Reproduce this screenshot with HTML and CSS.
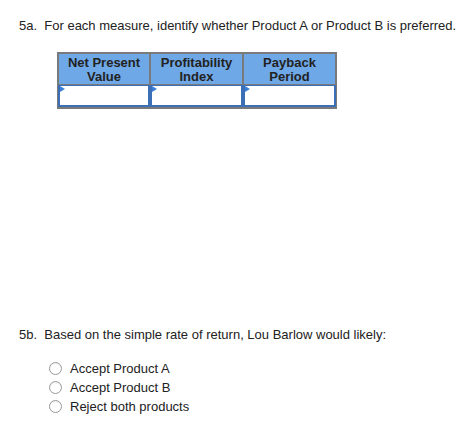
FILE: index.html
```html
<!DOCTYPE html>
<html>
<head>
<meta charset="utf-8">
<link rel="stylesheet" href="styles.css">
</head>
<body>
<div class="page">
  <p class="q">5a.&nbsp; For each measure, identify whether Product A or Product B is preferred.</p>
  <div class="grid">
    <div class="th">Net Present<br>Value</div>
    <div class="th">Profitability<br>Index</div>
    <div class="th">Payback<br>Period</div>
    <div class="inp"><span class="flag"></span></div>
    <div class="inp"><span class="flag"></span></div>
    <div class="inp"><span class="flag"></span></div>
  </div>
  <p class="q q2">5b.&nbsp; Based on the simple rate of return, Lou Barlow would likely:</p>
  <ul class="opts">
    <li><span class="radio"></span>Accept Product A</li>
    <li><span class="radio"></span>Accept Product B</li>
    <li><span class="radio"></span>Reject both products</li>
  </ul>
</div>
</body>
</html>
```
FILE: styles.css
```css
html, body { margin: 0; padding: 0; background: #fff; }
body { font-family: "Liberation Sans", Arial, sans-serif; color: #222; }
.page { padding: 18px 0 0 19px; }
.q { margin: 0; font-size: 13px; line-height: 16px; color: #222; }
.grid {
  margin: 18px 0 0 38px;
  width: 280px;
  box-sizing: border-box;
  display: grid;
  grid-template-columns: 90px 91px 91px;
  grid-template-rows: 30px 22px;
  column-gap: 2px;
  row-gap: 1px;
  border: 2px solid #7a7a7a;
  background: #7a7a7a;
}
.th {
  background: #6fa8e6;
  display: flex;
  align-items: center;
  justify-content: center;
  text-align: center;
  font-size: 13px;
  line-height: 14px;
  font-weight: bold;
  color: #222;
  padding-top: 1px;
}
.inp {
  position: relative;
  background: #fff;
  border: 2px solid #3d6fb6;
  border-top-width: 1px;
  margin: 0 -1px;
}
.grid .inp:nth-child(4) { margin-left: -1px; }
.flag {
  position: absolute;
  left: 0;
  top: 0;
  width: 0; height: 0;
  border-top: 3px solid transparent;
  border-bottom: 3px solid transparent;
  border-left: 5px solid #3b7fd6;
}
.q2 { margin-top: 218px; }
.opts { list-style: none; margin: 16px 0 0 30px; padding: 0; }
.opts li {
  display: flex;
  align-items: center;
  height: 19px;
  font-size: 13px;
  color: #222;
}
.radio {
  width: 13px; height: 13px;
  border: 1px solid #9a9a9a;
  border-radius: 50%;
  margin-right: 8px;
  background: #fff;
  box-sizing: border-box;
  box-shadow: inset 0 1px 1px rgba(0,0,0,0.08);
}
```
